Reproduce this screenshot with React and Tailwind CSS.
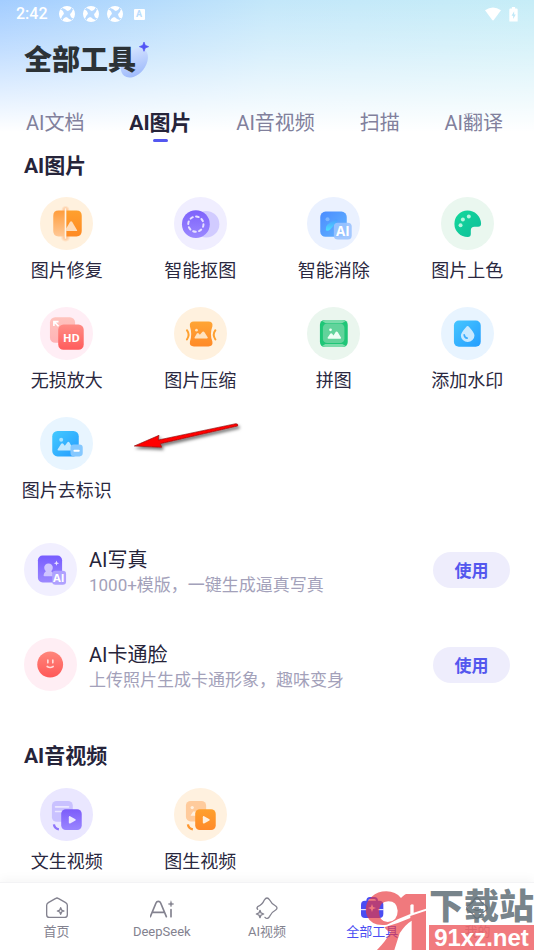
import React from "react";

const FONT = "font-[Roboto,'Noto_Sans_CJK_SC',sans-serif]";

function Sparkle({ cx, cy, r, ...rest }) {
  const k = r * 0.28;
  const d = `M${cx} ${cy - r}L${cx + k} ${cy - k}L${cx + r} ${cy}L${cx + k} ${cy + k}L${cx} ${cy + r}L${cx - k} ${cy + k}L${cx - r} ${cy}L${cx - k} ${cy - k}Z`;
  return <path d={d} strokeLinejoin="round" {...rest} />;
}

function Gradient({ id, from, to, diagonal }) {
  return (
    <linearGradient id={id} x1="0" y1="0" x2={diagonal ? "1" : "0"} y2="1">
      <stop offset="0" stopColor={from} />
      <stop offset="1" stopColor={to} />
    </linearGradient>
  );
}

function Disc({ color, children }) {
  return (
    <svg viewBox="0 0 160 160" className="size-[53px] shrink-0" aria-hidden="true">
      <circle cx="80" cy="80" r="80" fill={color} />
      {children}
    </svg>
  );
}

const RepairIcon = () => (
  <Disc color="#fff1de">
    <defs>
      <Gradient id="repairL" from="#ff9d3c" to="#ffc896" />
      <Gradient id="repairR" from="#ffa02e" to="#ff8a24" />
      <radialGradient id="repairGlow">
        <stop offset="0" stopColor="#ff9a50" stopOpacity="0.7" />
        <stop offset="1" stopColor="#ff9a50" stopOpacity="0" />
      </radialGradient>
    </defs>
    <ellipse cx="77" cy="38" rx="13" ry="12" fill="url(#repairGlow)" />
    <ellipse cx="77" cy="122" rx="15" ry="14" fill="url(#repairGlow)" />
    <path d="M56 41H76V119H56Q40 119 40 103V57Q40 41 56 41Z" fill="url(#repairL)" />
    <path d="M78 41H110Q126 41 126 57V103Q126 119 110 119H78Z" fill="url(#repairR)" />
    <path d="M79 95L91 75Q94 71 97 75L112 100Q113 103 109 103H79Z" fill="#ffdcb9" />
    <path d="M77 34V126" stroke="#fff4e6" strokeWidth="5" />
  </Disc>
);

const CutoutIcon = () => (
  <Disc color="#f0eeff">
    <defs><Gradient id="cutout" from="#7d62fb" to="#9b88ff" /></defs>
    <circle cx="97" cy="82" r="40" fill="#d1cbff" />
    <circle cx="66" cy="82" r="42" fill="url(#cutout)" />
    <circle cx="66" cy="82" r="23" fill="none" stroke="#e6e0ff" strokeWidth="6" strokeDasharray="8 10.06" strokeLinecap="round" />
  </Disc>
);

const EraseIcon = () => (
  <Disc color="#eaf1ff">
    <defs>
      <Gradient id="erase" from="#4b8cff" to="#62b4ff" diagonal />
      <Gradient id="eraseBrush" from="#4b9cff" to="#4ee0ff" />
    </defs>
    <rect x="40" y="44" width="80" height="76" rx="16" fill="url(#erase)" />
    <circle cx="62" cy="67" r="6" fill="#7db6ff" />
    <path d="M86 68Q96 66 91 75L70 98Q63 105 57 100Q55 91 61 84Q72 74 86 68Z" fill="url(#eraseBrush)" />
    <rect x="81" y="78" width="54" height="50" rx="12" fill="#9bc3ff" fillOpacity="0.9" />
    <text x="108" y="117" textAnchor="middle" fontSize="40" fontWeight="700" fill="#fff" fontFamily="Open Sans, sans-serif">AI</text>
  </Disc>
);

const PaletteIcon = () => (
  <Disc color="#eaf7ef">
    <defs><Gradient id="palette" from="#14d99b" to="#0fbd9b" diagonal /></defs>
    <path d="M81 121A40 40 0 0 1 80 41A41 41 0 0 1 121 80Q121 90 112 90H101Q90 90 90 101V112Q90 121 81 121Z" fill="url(#palette)" />
    <g fill="#b8f5df"><circle cx="84" cy="59" r="6" /><circle cx="66" cy="68" r="6" /><circle cx="59" cy="85" r="6" /></g>
  </Disc>
);

const HdIcon = () => (
  <Disc color="#ffeef5">
    <defs>
      <Gradient id="hdBack" from="#ffc3bd" to="#ffb3b6" />
      <Gradient id="hd" from="#ff8c85" to="#ff5c5c" />
    </defs>
    <rect x="30" y="31" width="76" height="77" rx="16" fill="url(#hdBack)" />
    <path d="M42 57V44H56M43 45L56 58" fill="none" stroke="#fff" strokeWidth="5" />
    <rect x="55" y="53" width="77" height="76" rx="16" fill="url(#hd)" />
    <text x="95" y="105" textAnchor="middle" fontSize="34" fontWeight="700" fill="#fff" fontFamily="Open Sans, sans-serif">HD</text>
  </Disc>
);

const CompressIcon = () => (
  <Disc color="#fff1de">
    <defs><Gradient id="compress" from="#ffa535" to="#ff8a28" /></defs>
    <path d="M60 44H104Q118 44 116 58Q107 82 116 105Q118 119 104 119H60Q46 119 48 105Q56 82 48 58Q46 44 60 44Z" fill="url(#compress)" />
    <path d="M39 70Q49 84 39 98M125 70Q115 84 125 98" fill="none" stroke="#ffa02f" strokeWidth="6" strokeLinecap="round" />
    <circle cx="68" cy="70" r="4" fill="#ffe3c0" />
    <path d="M62 92L69 80Q72 77 75 80L78 84L86 75Q89 72 92 76L102 92Q102 95 99 95H64Q61 95 62 92Z" fill="#ffe3c0" />
  </Disc>
);

const CollageIcon = () => (
  <Disc color="#eaf6ee">
    <rect x="39" y="39" width="84" height="82" rx="15" fill="#1fc677" />
    <path d="M46 42Q50 39 56 39H106Q113 39 117 42L107 48H55ZM46 118Q50 121 56 121H106Q113 121 117 118L107 112H55Z" fill="#7bdcab" />
    <rect x="48" y="50" width="65" height="59" rx="13" fill="#62d39b" />
    <circle cx="71" cy="69" r="4" fill="#eefff5" />
    <path d="M62 93L70 81Q73 78 76 81L80 86L87 75Q90 72 93 76L103 93Q103 96 100 96H65Q62 96 62 93Z" fill="#eefff5" />
  </Disc>
);

const WatermarkIcon = () => (
  <Disc color="#e8f4ff">
    <defs><Gradient id="drop" from="#46c6ff" to="#259eff" diagonal /></defs>
    <rect x="39" y="41" width="81" height="79" rx="15" fill="url(#drop)" />
    <path d="M76 60Q80 54 85 60Q101 78 101 86A20 19 0 0 1 60 86Q60 78 76 60Z" fill="#c9e9ff" />
    <path d="M70 84Q71 93 79 94" fill="none" stroke="#3badff" strokeWidth="5" strokeLinecap="round" />
  </Disc>
);

const RemoveMarkIcon = () => (
  <Disc color="#e8f5ff">
    <defs><Gradient id="remove" from="#45caff" to="#249cff" diagonal /></defs>
    <rect x="37" y="42" width="80" height="77" rx="16" fill="url(#remove)" />
    <circle cx="64" cy="69" r="6" fill="#a8e2ff" />
    <path d="M53 98L64 81Q67 78 70 81L75 87L83 76Q86 73 89 77L96 90V101H56Q52 101 53 98Z" fill="#c3e9ff" />
    <rect x="92" y="83" width="37" height="36" rx="10" fill="#85c8ff" />
    <path d="M104 102H117" stroke="#fff" strokeWidth="6" strokeLinecap="round" />
  </Disc>
);

const PortraitIcon = () => (
  <Disc color="#f1efff">
    <defs><Gradient id="portrait" from="#775cff" to="#9c88ff" /></defs>
    <rect x="42" y="38" width="73" height="81" rx="14" fill="url(#portrait)" />
    <path d="M66 85A13 13 0 1 1 82 85Q90 90 90 98Q89 100 86 100H62Q59 100 59 97Q60 89 66 85Z" fill="#cfc5ff" />
    <Sparkle cx={98} cy={61} r={8} fill="#e6e0ff" />
    <rect x="85" y="84" width="42" height="42" rx="10" fill="#afa1ff" />
    <text x="105" y="117" textAnchor="middle" fontSize="34" fontWeight="700" fill="#fff" fontFamily="Open Sans, sans-serif">AI</text>
  </Disc>
);

const FaceIcon = () => (
  <Disc color="#ffeef4">
    <defs><Gradient id="face" from="#ff867b" to="#ff5858" /></defs>
    <circle cx="79" cy="80" r="39" fill="url(#face)" />
    <path d="M72 67V75M87 67V75M70 86Q79 92 88 86" fill="none" stroke="#ffdad8" strokeWidth="5" strokeLinecap="round" />
  </Disc>
);

const TextVideoIcon = () => (
  <Disc color="#eae7ff">
    <defs><Gradient id="textVideo" from="#7c5cfa" to="#9a86ff" /></defs>
    <rect x="36" y="39" width="63" height="63" rx="14" fill="#c9c1ff" />
    <path d="M47 57H86M47 71H76" stroke="#ebe7ff" strokeWidth="5" strokeLinecap="round" />
    <path d="M42 110Q44 123 57 125" fill="none" stroke="#8e75fb" strokeWidth="7" />
    <rect x="64" y="64" width="62" height="63" rx="14" fill="url(#textVideo)" />
    <path d="M87 88Q87 84 91 85L107 94Q109 96 107 98L91 107Q87 108 87 104Z" fill="#ece8ff" />
  </Disc>
);

const ImageVideoIcon = () => (
  <Disc color="#fff1df">
    <defs><Gradient id="imageVideo" from="#ffa02c" to="#ff8a2a" /></defs>
    <rect x="36" y="39" width="61" height="62" rx="14" fill="#ffcb9c" />
    <circle cx="55" cy="59" r="5" fill="#fff0df" />
    <path d="M50 83L58 71H66V84H52Z" fill="#fff0df" />
    <path d="M42 110Q44 123 57 125" fill="none" stroke="#ff972f" strokeWidth="7" />
    <rect x="64" y="64" width="62" height="63" rx="14" fill="url(#imageVideo)" />
    <path d="M87 88Q87 84 91 85L107 94Q109 96 107 98L91 107Q87 108 87 104Z" fill="#fff0df" />
  </Disc>
);

const imageTools = [
  ["图片修复", RepairIcon],
  ["智能抠图", CutoutIcon],
  ["智能消除", EraseIcon],
  ["图片上色", PaletteIcon],
  ["无损放大", HdIcon],
  ["图片压缩", CompressIcon],
  ["拼图", CollageIcon],
  ["添加水印", WatermarkIcon],
  ["图片去标识", RemoveMarkIcon],
];

const videoTools = [
  ["文生视频", TextVideoIcon],
  ["图生视频", ImageVideoIcon],
];

const features = [
  ["AI写真", "1000+模版，一键生成逼真写真", PortraitIcon],
  ["AI卡通脸", "上传照片生成卡通形象，趣味变身", FaceIcon],
];

const tabs = ["AI文档", "AI图片", "AI音视频", "扫描", "AI翻译"];

function ToolGrid({ tools }) {
  return (
    <div className="grid grid-cols-4 gap-y-6">
      {tools.map(([name, Icon]) => (
        <button key={name} type="button" className="flex flex-col items-center gap-[9px] text-[18px] leading-6 whitespace-nowrap text-[#2a2840]">
          <Icon />
          {name}
        </button>
      ))}
    </div>
  );
}

function NavIcon({ children }) {
  return (
    <svg viewBox="0 0 72 72" className="size-6" fill="none" stroke="currentColor" strokeWidth="4" strokeLinejoin="round" strokeLinecap="round" aria-hidden="true">
      {children}
    </svg>
  );
}

const navItems = [
  ["首页", (
    <NavIcon>
      <path d="M31 8Q36 4 41 8L62 20Q67 23 67 28V56Q67 64 59 64H13Q5 64 5 56V28Q5 23 10 20Z" />
      <Sparkle cx={47} cy={45} r={10} />
    </NavIcon>
  )],
  ["DeepSeek", (
    <NavIcon>
      <path d="M1 62L18 21Q20 16 25 16Q30 16 32 21L49 62M8 49H42M63 41V62" strokeWidth="5" />
      <Sparkle cx={63} cy={24} r={9} fill="currentColor" strokeWidth="1" />
    </NavIcon>
  )],
  ["AI视频", (
    <NavIcon>
      <path d="M8 40Q4 36 8 32Q22 26 28 12Q36 0 44 12Q50 24 62 30Q70 36 62 42Q50 48 44 61Q37 72 30 64" />
      <Sparkle cx={15} cy={54} r={11} />
    </NavIcon>
  )],
  ["全部工具", (
    <NavIcon>
      <path d="M22 15Q22 6 30 6H43Q51 6 51 15" strokeWidth="6" />
      <rect x="3" y="14" width="67" height="52" rx="12" fill="currentColor" stroke="none" />
      <path d="M2 41H18M55 41H70" stroke="#fff" strokeWidth="3" />
      <Sparkle cx={36} cy={36} r={12} fill="#fff" stroke="none" />
    </NavIcon>
  )],
  ["我的", (
    <NavIcon>
      <path d="M30 8Q36 2 42 8Q49 22 64 30Q70 36 64 42Q50 50 42 64Q36 70 30 64Q22 50 8 42Q2 36 8 30Q23 22 30 8Z" />
      <path d="M26 39Q36 47 46 39" />
    </NavIcon>
  )],
];

function StatusBar() {
  return (
    <div className="flex h-7 items-center justify-between px-4 text-white">
      <div className="flex items-center">
        <span className="text-[16px] leading-5 font-medium">2:42</span>
        <div className="ml-[11px] flex items-center gap-2">
          {[0, 1, 2].map((n) => (
            <svg key={n} viewBox="0 0 48 48" className="size-4" aria-hidden="true">
              <circle cx="24" cy="24" r="24" fill="currentColor" />
              <g fill="#b6d9ff">
                <circle cx="24" cy="24" r="9" />
                <path d="M15 25Q14 13 5 11L10 6Q18 8 25 15ZM23 15Q35 14 37 5L42 10Q40 18 33 25ZM33 23Q34 35 43 37L38 42Q30 40 23 33ZM25 33Q13 34 11 43L6 38Q8 30 15 23Z" />
              </g>
            </svg>
          ))}
          <span className="ml-[3px] flex size-[11px] items-center justify-center rounded-[1px] bg-white text-[9px] leading-none font-bold text-[#b8dcfd]">A</span>
        </div>
      </div>
      <div className="flex items-center gap-2">
        <svg viewBox="0 0 50 42" className="h-[14px] w-4" aria-hidden="true">
          <path d="M0 9Q25 -8 50 9L28 39Q25 43 22 39Z" fill="currentColor" />
        </svg>
        <svg viewBox="0 0 28 46" className="h-[15px] w-[9px]" aria-hidden="true">
          <path d="M9 0H19V4H24Q27 4 27 8V45H1V8Q1 4 4 4H9Z" fill="currentColor" />
          <path d="M16 13L8 27H13V37L21 23H16Z" fill="#bfe8f8" />
        </svg>
      </div>
    </div>
  );
}

function SiteStamp() {
  return (
    <div className="pointer-events-none absolute right-0 bottom-0 flex items-end">
      <svg viewBox="0 0 192 180" className="h-[60px] w-16" aria-hidden="true">
        <g fill="#e93a40" fillOpacity="0.68">
          <path fillRule="evenodd" d="M64 4Q92 4 108 24Q120 12 124 12H183V56L146 68V44Q140 40 136 46V72L98 88L66 104Q20 110 6 78Q-6 44 20 20Q38 4 64 4ZM70 34Q44 34 42 64Q42 96 68 96Q98 94 98 62Q96 34 70 34Z" />
          <path d="M58 112Q100 100 136 84V78L183 62V180H140V92Q120 104 104 130L88 180H36Q64 152 78 124Q70 128 58 112Z" />
        </g>
      </svg>
      <div className="w-[105px]">
        <div className="text-[35px] leading-[34px] font-black whitespace-nowrap text-[#5f6e76]/85">下载站</div>
        <div className="bg-[#ee6469]/85 text-center font-['Liberation_Sans',sans-serif] text-[24px] leading-[25px] font-bold text-white">91xz.net</div>
      </div>
    </div>
  );
}

export default function App() {
  return (
    <div className={`relative flex min-h-screen flex-col overflow-hidden bg-white ${FONT}`}>
      <header className="bg-[linear-gradient(to_bottom,rgba(255,255,255,0),rgba(255,255,255,0.35)_50px,#fff_132px),linear-gradient(to_right,#a3cdff,#c3e7fa_50%,#c6edf7)]">
        <StatusBar />
        <h1 className="mt-[13px] flex pl-6 text-[28px] leading-10 font-black text-[#2c3236]">
          <span className="relative">
            <svg viewBox="0 0 96 120" className="absolute -right-[15px] bottom-px h-10 w-8" aria-hidden="true">
              <defs><Gradient id="blob" from="#dbe8ff" to="#95b3fb" diagonal /></defs>
              <ellipse cx="46" cy="68" rx="34" ry="50" transform="rotate(38 46 68)" fill="url(#blob)" />
              <Sparkle cx={75} cy={20} r={14} fill="#5154f5" stroke="#5154f5" strokeWidth="2" />
            </svg>
            <span className="relative">全部工具</span>
          </span>
        </h1>
        <div role="tablist" className="mt-7 flex h-[39px] items-start justify-between pr-[31px] pl-[26px] text-[20px] leading-7 whitespace-nowrap text-[#81809c]">
          {tabs.map((t, i) => (
            <button
              key={t}
              type="button"
              role="tab"
              aria-selected={i === 1}
              className={i === 1 ? "flex flex-col items-center gap-[2px] text-[21px] font-bold text-[#26243a] after:h-[3px] after:w-[15px] after:rounded-full after:bg-[#5457f0]" : ""}
            >
              {t}
            </button>
          ))}
        </div>
      </header>

      <main className="flex-1">
        <section>
          <h2 className="mt-1 mb-[17px] pl-6 text-[21px] leading-7 font-bold text-[#26243a]">AI图片</h2>
          <div className="relative">
            <ToolGrid tools={imageTools} />
            <svg viewBox="0 0 330 90" className="absolute bottom-[50px] left-[131px] h-[30px] w-[110px] overflow-visible" aria-hidden="true">
              <defs>
                <filter id="arrowShade" x="-10%" y="-30%" width="120%" height="180%">
                  <feDropShadow dx="5" dy="7" stdDeviation="4" floodColor="#000" floodOpacity="0.55" />
                </filter>
              </defs>
              <path d="M10 69L84 37L82 51L315 2Q322 2 320 9L88 62L92 73Z" fill="#f00" stroke="#8e1010" strokeWidth="2" filter="url(#arrowShade)" />
            </svg>
          </div>
        </section>

        <ul className="mt-10 flex flex-col gap-[42px] px-6">
          {features.map(([name, note, Icon]) => (
            <li key={name} className="flex items-center">
              <Icon />
              <div className="ml-3 flex-1 pt-[3px]">
                <h3 className="text-[20px] leading-7 text-[#26243a]">{name}</h3>
                <p className="text-[17px] leading-[22px] text-[#a3a1ba]">{note}</p>
              </div>
              <button type="button" aria-label={`使用 ${name}`} className="h-9 w-[77px] rounded-full bg-[#eeedfc] pt-[3px] text-[17px] leading-6 font-bold text-[#5457ee]">使用</button>
            </li>
          ))}
        </ul>

        <section className="mt-[51px]">
          <h2 className="mb-[18px] pl-6 text-[21px] leading-7 font-bold text-[#26243a]">AI音视频</h2>
          <ToolGrid tools={videoTools} />
        </section>
      </main>

      <nav className="mt-[7px] grid grid-cols-5 border-t border-[#f3f3f5] bg-white px-1 pt-[13px] pb-2 shadow-[0_-3px_10px_rgba(0,0,0,0.04)]">
        {navItems.map(([name, icon], i) => (
          <a key={name} href="#" className={`flex flex-col items-center gap-[2px] text-[13px] leading-5 ${i === 3 ? "text-[#4a4df2]" : "text-[#83828f]"}`}>
            {icon}
            {name}
          </a>
        ))}
      </nav>
      <SiteStamp />
    </div>
  );
}
